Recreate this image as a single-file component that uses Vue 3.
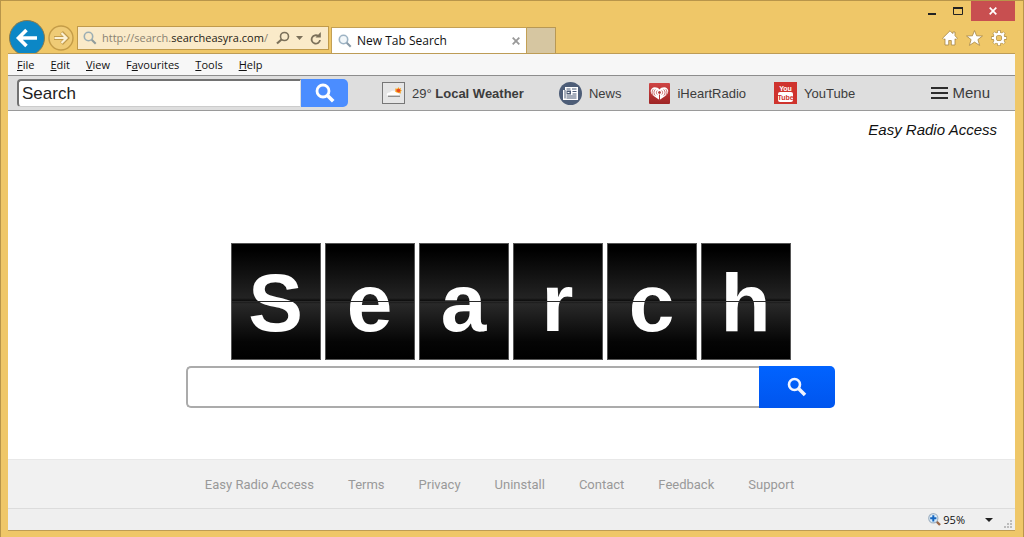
<script setup>
import { ref } from 'vue'

const address = ref('http://search.searcheasyra.com/')
const toolbarQuery = ref('Search')
const query = ref('')
const menus = [
  ['', 'F', 'ile'],
  ['', 'E', 'dit'],
  ['', 'V', 'iew'],
  ['F', 'a', 'vourites'],
  ['', 'T', 'ools'],
  ['', 'H', 'elp']
]
const letters = ['S', 'e', 'a', 'r', 'c', 'h']
const links = ['Easy Radio Access', 'Terms', 'Privacy', 'Uninstall', 'Contact', 'Feedback', 'Support']
</script>

<template>
  <div class="window">
    <header class="chrome">
      <div class="nav">
        <button class="back" aria-label="Back">
          <svg width="36" height="36" viewBox="0 0 36 36">
            <circle cx="18" cy="18" r="17.500" fill="#0c87c6" stroke="#8b7a4a" />
            <path d="M28 18H10M17.500 10L9.500 18l8 8" fill="none" stroke="#fff" stroke-width="3.600" />
          </svg>
        </button>
        <button class="forward" aria-label="Forward">
          <svg width="26" height="26" viewBox="0 0 26 26">
            <circle cx="13" cy="13" r="12" fill="#efcb76" stroke="#c49c48" stroke-width="1.400" />
            <path d="M6 13h13M13.500 7.500L19 13l-5.500 5.500" fill="none" stroke="#c19b4c" stroke-width="4" />
            <path d="M6.500 13h12M13.500 8l5 5-5 5" fill="none" stroke="#fcf1d5" stroke-width="2.200" />
          </svg>
        </button>
        <div class="address">
          <svg width="14" height="14" viewBox="0 0 14 14" fill="none">
            <circle cx="5.500" cy="5.500" r="4.200" stroke="#9caeb4" stroke-width="1.600" />
            <path d="M8.700 8.700l4 4" stroke="#8f9b9b" stroke-width="2" />
          </svg>
          <a class="url" :href="address">http://search.<b>searcheasyra.com</b>/</a>
          <button aria-label="Search the web">
            <svg width="14" height="14" viewBox="0 0 14 14" fill="none" stroke="#7b705a">
              <circle cx="8.500" cy="5.500" r="4" stroke-width="1.600" />
              <path d="M5.500 8.500l-4.500 4" stroke-width="2.200" />
            </svg>
          </button>
          <button aria-label="Show address list">
            <svg width="7" height="4" viewBox="0 0 7 4"><path d="M0 0h7L3.500 4z" fill="#7b705a" /></svg>
          </button>
          <button class="reload" aria-label="Refresh">
            <svg width="12" height="13" viewBox="0 0 12 13">
              <path d="M8.500 4.200A4.200 4.200 0 1 0 10 8" fill="none" stroke="#7b705a" stroke-width="1.800" />
              <path d="M10.800 0v5.500H5.500z" fill="#7b705a" />
            </svg>
          </button>
        </div>
      </div>
      <div class="tabs">
        <div class="tab">
          <svg width="14" height="14" viewBox="0 0 14 14" fill="none">
            <circle cx="5.500" cy="5.500" r="4.200" fill="#f2f7fa" stroke="#9db3c4" stroke-width="1.600" />
            <path d="M8.700 8.700l4 4" stroke="#889aa8" stroke-width="2" />
          </svg>
          <span>New Tab Search</span>
          <button aria-label="Close tab">
            <svg width="8" height="8" viewBox="0 0 8 8"><path d="M.7.7l6.600 6.600M7.300.7L.7 7.300" stroke="#999" stroke-width="1.800" /></svg>
          </button>
        </div>
        <button class="new-tab" aria-label="New tab"></button>
      </div>
      <div class="corner">
        <div class="caption">
          <button aria-label="Minimize">
            <svg width="8" height="10" viewBox="0 0 8 10"><path d="M0 8h8" stroke="#222" stroke-width="2" /></svg>
          </button>
          <button aria-label="Maximize">
            <svg width="10" height="8" viewBox="0 0 10 8"><path d="M.5 0v7.500h9V0" fill="none" stroke="#222" /><path d="M0 1h10" stroke="#222" stroke-width="2" /></svg>
          </button>
          <button class="close" aria-label="Close">
            <svg width="8" height="8" viewBox="0 0 8 8"><path d="M.7.7l6.600 6.600M7.300.7L.7 7.300" stroke="#fff" stroke-width="1.700" /></svg>
          </button>
        </div>
        <div class="tools">
          <button aria-label="Home">
            <svg width="16" height="16" viewBox="0 0 16 16">
              <path d="M8 .8L.6 8.200l1.400 1.400 1-.8V15h3.700v-4.500h2.600V15H13V8.800l1 .8 1.400-1.400-2.400-2.400V2h-2.200v1.600z" fill="#fff" stroke="#a68746" stroke-width=".8" />
            </svg>
          </button>
          <button aria-label="Favourites">
            <svg width="17" height="16" viewBox="0 0 17 16">
              <path d="M8.500.6l2.100 5.200 5.900.2-4.600 3.600 1.700 5.800-5.100-3.300-5.100 3.300 1.700-5.800L.5 6l5.900-.2z" fill="#fff" stroke="#a68746" stroke-width=".8" />
            </svg>
          </button>
          <button aria-label="Settings">
            <svg width="16" height="16" viewBox="0 0 16 16" fill="none">
              <g stroke="#a68746">
                <circle cx="8" cy="8" r="4.300" stroke-width="3.600" />
                <path d="M8 .3v3M8 12.700v3M.3 8h3M12.700 8h3M2.600 2.600l2 2M11.400 11.400l2 2M2.600 13.400l2-2M11.400 4.600l2-2" stroke-width="3.400" />
              </g>
              <g stroke="#fff">
                <circle cx="8" cy="8" r="4.300" stroke-width="2.400" />
                <path d="M8 .8v3M8 12.200v3M.8 8h3M12.200 8h3M2.900 2.900l2 2M11.100 11.100l2 2M2.900 13.100l2-2M11.100 4.900l2-2" stroke-width="2.200" />
              </g>
            </svg>
          </button>
        </div>
      </div>
    </header>

    <div class="page">
      <nav class="menubar">
        <button v-for="m in menus" :key="m[2]">{{ m[0] }}<u>{{ m[1] }}</u>{{ m[2] }}</button>
      </nav>

      <div class="toolbar">
        <form class="quick" @submit.prevent>
          <input v-model="toolbarQuery" type="text" aria-label="Toolbar search" />
          <button aria-label="Search">
            <svg width="20" height="20" viewBox="0 0 20 20" fill="none" stroke="#fff">
              <circle cx="8" cy="8" r="6" stroke-width="2.800" />
              <path d="M12.200 12.200l6 6" stroke-width="3.600" />
            </svg>
          </button>
        </form>
        <a class="item weather" href="#">
          <svg width="23" height="22" viewBox="0 0 23 22">
            <rect x=".5" y=".5" width="22" height="21" fill="#e6e6e6" stroke="#777" />
            <path d="M16.500 5l.6 1.700 2-.8-.6 1.900 1.500.9-1.500.9.5 1.900-2-.6-1 1.500-1.500-2-2-.5 1-1.500-.3-2 2.200.3z" fill="#f7a01b" />
            <circle cx="16.500" cy="8.500" r="1.800" fill="#ea4a21" />
            <path d="M5 13.500c-1-2 1-3.500 3-3 1-2.500 5.500-2.500 6 0 2.500-.4 4 1.300 3.600 3z" fill="#fff" />
            <path d="M6 14.300h12" stroke="#8c8c8c" stroke-width="1.300" />
          </svg>
          <span>29° <b>Local Weather</b></span>
        </a>
        <a class="item" href="#">
          <svg width="23" height="23" viewBox="0 0 23 23">
            <circle cx="11.500" cy="11.500" r="11.500" fill="#4d5d77" />
            <path d="M6 5h13v13H4V8h2z" fill="#fff" />
            <path d="M6 8v8.500M7.500 7h4M13 7h4.500M13.500 9.500h4M13.500 12h4M7.500 14h10M7.500 16h10" stroke="#4d5d77" stroke-width="1" />
            <path d="M7.500 8.500h4.500v4H7.500z" fill="#4d5d77" />
            <path d="M8.500 10.500h2" stroke="#fff" />
          </svg>
          <span>News</span>
        </a>
        <a class="item" href="#">
          <svg width="21" height="21" viewBox="0 0 21 21">
            <defs><linearGradient id="heart-bg" x1="0" y1="0" x2="0" y2="1"><stop offset="0" stop-color="#cf4545" /><stop offset="1" stop-color="#9e2424" /></linearGradient></defs>
            <rect width="21" height="21" rx="1" fill="url(#heart-bg)" />
            <path d="M9.800 16.500L4 12.500C.3 9.500 1.300 4.600 5.800 4.300c2 0 3.700.7 4.700 2.200 1-1.500 2.700-2.200 4.700-2.200 4.500.3 5.500 5.200 1.800 8.200l-5.800 4z" fill="#fff" />
            <g fill="none" stroke="#b83535">
              <circle cx="10.500" cy="9.500" r="1" fill="#b83535" />
              <path d="M10.500 11.500v6" />
              <path d="M8.300 7.500c-1.200 1-1.200 3 0 4M12.700 7.500c1.200 1 1.200 3 0 4M6.300 6.400c-1.800 1.800-1.800 4.400 0 6.200M14.700 6.400c1.800 1.800 1.800 4.400 0 6.200M4.200 6.200c-1.500 1.900-1.500 4.300 0 6.200M16.800 6.200c1.500 1.900 1.500 4.300 0 6.200" stroke-width=".7" />
            </g>
          </svg>
          <span>iHeartRadio</span>
        </a>
        <a class="item" href="#">
          <svg class="yt" width="23" height="22" viewBox="0 0 23 22">
            <rect width="23" height="22" fill="#cf332d" />
            <rect x="4" y="10" width="15" height="10" rx="2" fill="#fff" />
            <text x="11.500" y="8.500" text-anchor="middle" fill="#fff">You</text>
            <text x="11.500" y="17.500" text-anchor="middle" fill="#cf332d">Tube</text>
          </svg>
          <span>YouTube</span>
        </a>
        <button class="menu">
          <svg width="17" height="13" viewBox="0 0 17 13"><path d="M0 1h17M0 6h17M0 11h17" stroke="#2c2c2c" stroke-width="2" /></svg>
          <span>Menu</span>
        </button>
      </div>

      <main class="main">
        <p class="brand">Easy Radio Access</p>
        <h1 class="tiles" aria-label="Search">
          <span v-for="l in letters" :key="l" class="tile">{{ l }}</span>
        </h1>
        <form class="search" @submit.prevent>
          <input v-model="query" type="text" aria-label="Search the web" />
          <button aria-label="Search">
            <svg width="20" height="20" viewBox="0 0 20 20" fill="none" stroke="#f1f4ff">
              <circle cx="7.500" cy="7.500" r="5.500" stroke-width="2.600" />
              <path d="M11.500 11.500l6.500 6.500" stroke-width="3.600" />
            </svg>
          </button>
        </form>
      </main>

      <footer class="footer">
        <a v-for="l in links" :key="l" href="#">{{ l }}</a>
      </footer>

      <div class="status">
        <button class="zoom">
          <svg width="13" height="13" viewBox="0 0 13 13" fill="none">
            <path d="M8 8l4 4" stroke="#9a6748" stroke-width="2.400" />
            <circle cx="5.300" cy="5.300" r="4.600" fill="#d9ecfa" stroke="#a3b4c4" stroke-width="1.200" />
            <path d="M5.300 2.200v6.200M2.200 5.300h6.200" stroke="#1767c0" stroke-width="2" />
          </svg>
          <span>95%</span>
        </button>
        <button class="drop" aria-label="Zoom levels">
          <svg width="8" height="4" viewBox="0 0 8 4"><path d="M0 0h8L4 4z" fill="#222" /></svg>
        </button>
        <svg class="grip" width="9" height="9" viewBox="0 0 9 9">
          <path d="M6 0h2v2H6zM3 3h2v2H3zM6 3h2v2H6zM0 6h2v2H0zM3 6h2v2H3zM6 6h2v2H6z" fill="#bcbcbc" />
        </svg>
      </div>
    </div>
  </div>
</template>

<style>
body {
  margin: 0;
}
</style>

<style scoped>
* {
  box-sizing: border-box;
}
.window {
  display: flex;
  flex-direction: column;
  min-height: 100vh;
  padding: 0 8px 6px 7px;
  border: 1px solid #b8954a;
  border-bottom: 0;
  background: #efc768;
  font: 11px/16px "Open Sans", "Noto Sans", sans-serif;
  color: #111;
}
button {
  display: flex;
  align-items: center;
  justify-content: center;
  margin: 0;
  padding: 0;
  border: 0;
  background: none;
  font: inherit;
  color: inherit;
}
a {
  color: inherit;
  text-decoration: none;
}
svg {
  display: block;
  flex: none;
}
.chrome {
  display: flex;
  height: 52px;
  overflow: hidden;
}
.nav {
  display: flex;
  align-items: center;
  height: 36px;
  margin-top: 19px;
}
.back {
  margin-left: 1px;
}
.forward {
  margin: 0 3px;
}
.address {
  display: flex;
  align-items: center;
  width: 252px;
  height: 24px;
  padding: 0 6px 0 5px;
  border: 1px solid #c09a4b;
  background: #faeac9;
}
.url {
  flex: 1;
  margin-left: 5px;
  color: #8a8271;
  white-space: nowrap;
}
.url b {
  font-weight: 400;
  color: #1f1c15;
}
.address button + button {
  margin-left: 6px;
}
.address .reload {
  margin-left: 7px;
}
.tabs {
  display: flex;
  height: 26px;
  margin: 26px 0 0 2px;
}
.tab {
  display: flex;
  align-items: center;
  gap: 5px;
  width: 196px;
  padding: 0 6px;
  border: 1px solid #c3a055;
  border-bottom: 0;
  background: #fff;
}
.tab span {
  font-size: 12px;
}
.tab button {
  margin-left: auto;
}
.new-tab {
  width: 29px;
  border: 1px solid #b89854;
  border-width: 1px 1px 0 0;
  background: #d6c6a1;
}
.corner {
  margin-left: auto;
}
.caption {
  display: flex;
  align-items: center;
  justify-content: flex-end;
  height: 20px;
}
.caption button {
  width: 26px;
  height: 20px;
}
.caption .close {
  width: 44px;
  background: #c84f50;
}
.tools {
  display: flex;
  gap: 8px;
  margin: 9px 8px 0 0;
  justify-content: flex-end;
}
.page {
  display: flex;
  flex: 1;
  flex-direction: column;
  border: 1px solid #bd9c56;
  border-width: 1px 0;
  background: #fff;
}
.menubar {
  display: flex;
  align-items: center;
  gap: 16px;
  height: 21px;
  padding-left: 9px;
  background: #f7f7f7;
}
.menubar button {
  display: block;
}
.toolbar {
  display: flex;
  align-items: center;
  gap: 28px;
  height: 36px;
  padding: 0 25px 0 9px;
  border-top: 1px solid #8d8d8d;
  border-bottom: 1px solid #9a9a9a;
  background: #dedede;
  font: 13px/16px "Liberation Sans", Arial, sans-serif;
  color: #3c3c3c;
}
.quick {
  display: flex;
  width: 331px;
  height: 28px;
}
.quick input {
  flex: 1;
  min-width: 0;
  padding: 0 3px;
  border: 2px solid #727272;
  border-right: 1px solid #ddd;
  border-bottom: 1px solid #ccc;
  border-radius: 4px 0 0 4px;
  background: #fff;
  font: 17px/20px "Liberation Sans", Arial, sans-serif;
  color: #222;
}
.quick button {
  width: 47px;
  border-radius: 0 5px 5px 0;
  background: #4b8dff;
}
.item {
  display: flex;
  align-items: center;
  gap: 7px;
  white-space: nowrap;
}
.item span {
  padding-top: 2px;
}
.weather {
  margin: 0 7px 0 6px;
}
.yt text {
  font: bold 7px "Liberation Sans", Arial, sans-serif;
}
.menu {
  gap: 4px;
  margin-left: auto;
  font-size: 15px;
}
.main {
  display: flex;
  flex: 1;
  flex-direction: column;
  align-items: center;
  padding-right: 2px;
  font-family: "Liberation Sans", Arial, sans-serif;
}
.brand {
  align-self: flex-end;
  margin: 9px 16px 0 0;
  font-size: 15px;
  font-style: italic;
  line-height: 20px;
  color: #111;
}
.tiles {
  display: flex;
  gap: 4px;
  margin: 103px 0 6px;
}
.tile {
  position: relative;
  width: 90px;
  height: 117px;
  border: 1px solid #555;
  background: linear-gradient(#000 5%, #232323 47%, #0e0e0e 49%, #292929 52%, #050505 85%, #000);
  font-size: 82px;
  line-height: 118px;
  text-align: center;
  color: #fff;
}
.tile::after {
  content: "";
  position: absolute;
  inset: 57px 0 auto;
  height: 1px;
  background: #292929;
}
.search {
  display: flex;
  width: 649px;
  max-width: 100%;
  height: 42px;
}
.search input {
  flex: 1;
  min-width: 0;
  padding: 0 10px;
  border: 2px solid #ababab;
  border-right: 0;
  border-radius: 5px 0 0 5px;
  background: #fff;
  font: 18px "Liberation Sans", Arial, sans-serif;
}
.search button {
  width: 76px;
  border-radius: 0 5px 5px 0;
  background: linear-gradient(#0163ff, #0055ee);
}
.footer {
  display: flex;
  align-items: center;
  justify-content: center;
  gap: 34px;
  height: 49px;
  padding: 2px 24px 0 0;
  border-top: 1px solid #e8e8e8;
  background: #f1f1f1;
  font: 13px/16px Roboto, "Liberation Sans", sans-serif;
  color: #999;
}
.status {
  display: flex;
  align-items: center;
  height: 22px;
  padding-right: 2px;
  border-top: 1px solid #dcdcdc;
  background: #efefef;
}
.zoom {
  gap: 2px;
  margin-left: auto;
}
.drop {
  margin: 0 11px 0 20px;
}
.grip {
  align-self: flex-end;
  margin-bottom: 1px;
}
</style>
